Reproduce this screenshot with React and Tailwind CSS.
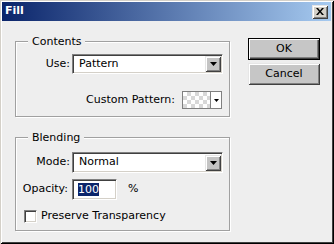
import React from 'react';

const sunken =
  'border border-t-[#808080] border-l-[#808080] border-b-white border-r-white shadow-[inset_1px_1px_0_#404040,inset_-1px_-1px_0_#d4d0c8]';
const raised =
  'shadow-[inset_1px_1px_0_#e6e6e6,inset_-1px_-1px_0_#404040,inset_2px_2px_0_#fff,inset_-2px_-2px_0_#808080]';
const group =
  'w-[215px] border border-[#a0a0a0] shadow-[inset_1px_1px_0_#fff,1px_1px_0_#fff]';

const DownArrow = ({ small }) => (
  <svg width={small ? 5 : 7} height={small ? 3 : 4} viewBox={small ? '0 0 5 3' : '0 0 7 4'}>
    <path d={small ? 'M0 0h5L2.5 3z' : 'M0 0h7L3.5 4z'} fill="#000" />
  </svg>
);

const Select = ({ value, h }) => (
  <div className={`ml-[2px] w-[151px] ${h} bg-white flex items-center justify-between ${sunken}`}>
    <span className="pl-[6px]">{value}</span>
    <div className={`w-[16px] h-[16px] mr-[1px] bg-[#c4c4c4] flex items-center justify-center ${raised}`}>
      <DownArrow />
    </div>
  </div>
);

const Legend = ({ children }) => (
  <legend className="ml-[12px] px-[4px] leading-[13px] bg-[#eeeeee]">{children}</legend>
);

export default function App() {
  return (
    <div className="w-[334px] h-[244px] bg-[#eeeeee] pt-[2px] pl-[2px] pr-[3px] pb-[3px] flex flex-col font-['DejaVu_Sans',sans-serif] text-[11px] text-black shadow-[inset_1px_1px_0_#d4d0c8,inset_-1px_-1px_0_#000,inset_2px_2px_0_#fff,inset_-2px_-2px_0_#404040]">
      {/* title bar */}
      <div className="h-[19px] flex items-center justify-between bg-[linear-gradient(to_right,#0a246a,#a6caf0)]">
        <span className="pl-[3px] font-bold text-white">Fill</span>
        <div className={`w-[16px] h-[14px] mr-[3px] bg-[#d4d0c8] flex items-center justify-center ${raised}`}>
          <svg width="8" height="7" viewBox="0 0 8 7">
            <path d="M0 0h2l2 2.5L6 0h2L5 3.5 8 7H6L4 4.5 2 7H0l3-3.5z" fill="#000" />
          </svg>
        </div>
      </div>

      <div className="flex flex-1">
        <div className="pl-[13px]">
          {/* Contents */}
          <fieldset className={`${group} mt-[14px] pb-[7px]`}>
            <Legend>Contents</Legend>
            <div className="flex items-center mt-[6px]">
              <span className="w-[54px] text-right">Use:</span>
              <Select value="Pattern" h="h-[20px]" />
            </div>
            <div className="flex items-center justify-end mt-[17px] pr-[7px]">
              <span>Custom Pattern:</span>
              <div className="ml-[7px] w-[40px] h-[18px] flex border border-[#808080] bg-white">
                <div className="w-[27px] h-full bg-[conic-gradient(#d8d8d8_25%,#fff_0_50%,#d8d8d8_0_75%,#fff_0)] bg-size-[8px_8px]" />
                <div className="w-[1px] h-full bg-[#808080]" />
                <div className="flex-1 flex items-center justify-center">
                  <DownArrow small />
                </div>
              </div>
            </div>
          </fieldset>

          {/* Blending */}
          <fieldset className={`${group} mt-[14px] pb-[5px]`}>
            <Legend>Blending</Legend>
            <div className="flex items-center mt-[8px]">
              <span className="w-[54px] text-right">Mode:</span>
              <Select value="Normal" h="h-[21px]" />
            </div>
            <div className="flex items-center mt-[6px]">
              <span className="w-[52px] text-right">Opacity:</span>
              <div className={`ml-[4px] w-[45px] h-[21px] bg-white flex items-center ${sunken}`}>
                <span className="ml-[5px] bg-[#0a246a] text-white leading-[13px]">100</span>
              </div>
              <span className="ml-[11px]">%</span>
            </div>
            <div className="flex items-center mt-[8px]">
              <div className={`ml-[8px] w-[13px] h-[13px] bg-white ${sunken}`} />
              <span className="ml-[4px]">Preserve Transparency</span>
            </div>
          </fieldset>
        </div>

        {/* buttons */}
        <div className="ml-[18px] pt-[17px] flex flex-col gap-[3px]">
          <button className="w-[72px] h-[22px] border border-black bg-[#c6c6c6] shadow-[inset_1px_1px_0_#fff,inset_-1px_-1px_0_#404040,inset_-2px_-2px_0_#808080]">
            OK
          </button>
          <button className={`w-[72px] h-[22px] bg-[#c6c6c6] ${raised}`}>Cancel</button>
        </div>
      </div>
    </div>
  );
}
